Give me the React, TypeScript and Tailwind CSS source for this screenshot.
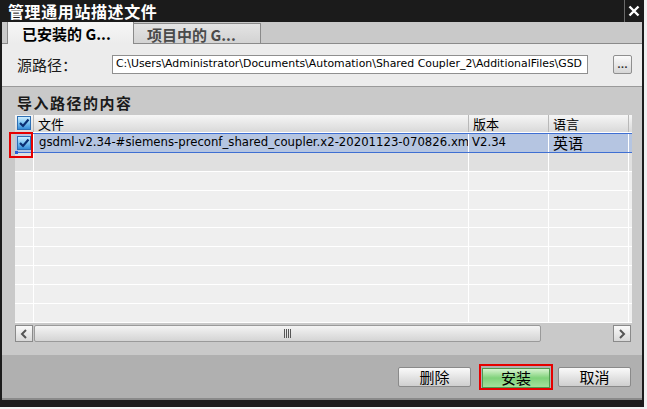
import React from "react";

const cjk = { fontFamily: '"Noto Sans CJK SC", "Noto Sans", sans-serif' };
const latin = { fontFamily: '"DejaVu Sans", "Noto Sans CJK SC", sans-serif' };

const CheckBox = () => (
  <svg width="14" height="14" viewBox="0 0 14 14">
    <defs>
      <linearGradient id="cb" x1="0" y1="0" x2="0" y2="1">
        <stop offset="0" stopColor="#d4f0ff" />
        <stop offset="0.5" stopColor="#7cc4f2" />
        <stop offset="1" stopColor="#2f86d6" />
      </linearGradient>
    </defs>
    <rect x="0.5" y="0.5" width="13" height="13" fill="url(#cb)" stroke="#2d6fb4" />
    <path d="M3 7 L6 10 L11.5 3.5" fill="none" stroke="#0b2f74" strokeWidth="2.2" />
  </svg>
);

const columns = [
  { name: "文件", w: "w-[435px]" },
  { name: "版本", w: "w-[80px]" },
  { name: "语言", w: "w-[80px]" },
];

const Button = ({ label }: { label: string }) => (
  <div
    className="w-[73px] h-[20px] flex items-center justify-center border border-[#8a8a8a] rounded-[2px] bg-gradient-to-b from-[#fafafa] to-[#cfcfcf] text-[15px] text-black"
    style={cjk}
  >
    {label}
  </div>
);

const EmptyRow = ({ dark }: { dark: boolean }) => (
  <div className={`flex h-[19px] border-b border-white ${dark ? "bg-[#e0e0e0]" : "bg-[#efefef]"}`}>
    <div className="w-[19px] border-r border-white" />
    <div className="w-[435px] border-r border-white" />
    <div className="w-[80px] border-r border-white" />
    <div className="w-[80px] border-r border-white" />
    <div className="flex-1" />
  </div>
);

export default function App() {
  return (
    <div className="w-[647px] h-[409px] bg-[#f0f0f0] overflow-hidden">
      <div className="w-[644px] h-[407px] bg-[#1b1b1b] flex flex-col px-[2px] pb-[7px]">
        {/* title bar */}
        <div className="h-[22px] flex items-center justify-between shrink-0">
          <span className="pl-[6px] text-white font-bold text-[16px] tracking-[0.6px] leading-none" style={cjk}>
            管理通用站描述文件
          </span>
          <div className="h-[22px] w-[18px] border-l border-[#6a6a6a] flex items-center justify-center">
            <svg width="12" height="12" viewBox="0 0 12 12">
              <path d="M1.5 1.5 L10.5 10.5 M10.5 1.5 L1.5 10.5" stroke="#fff" strokeWidth="2.4" />
            </svg>
          </div>
        </div>

        {/* tabs */}
        <div className="h-[22px] bg-[#c9c9c9] flex items-end shrink-0 relative">
          <div className="absolute left-0 right-0 bottom-0 h-px bg-[#8a8a8a]" />
          <div className="ml-[5px] w-[127px] h-[22px] relative z-10 bg-gradient-to-b from-[#f6f6f6] to-[#ececec] border-l border-r border-[#8a8a8a] flex items-center pl-[14px]">
            <span className="text-[15px] font-bold text-black leading-none" style={cjk}>
              已安装的 G...
            </span>
          </div>
          <div className="w-[127px] h-[21px] bg-gradient-to-b from-[#e4e4e4] to-[#d2d2d2] border-t border-r border-[#8a8a8a] flex items-center pl-[13px]">
            <span className="text-[15px] font-semibold text-[#4a4a4a] leading-none" style={cjk}>
              项目中的 G...
            </span>
          </div>
        </div>

        {/* source path */}
        <div className="h-[42px] bg-[#ececec] flex items-center shrink-0 pb-[2px]">
          <span className="ml-[15px] w-[95px] text-[15px] text-[#1a1a1a] leading-none" style={cjk}>
            源路径：
          </span>
          <div className="w-[476px] h-[19px] bg-white border border-[#8f8f8f] flex items-center pl-[3px] overflow-hidden whitespace-nowrap">
            <span className="text-[10.9px] text-black" style={latin}>
              C:\Users\Administrator\Documents\Automation\Shared Coupler_2\AdditionalFiles\GSD
            </span>
          </div>
          <div className="ml-[25px] w-[19px] h-[19px] border border-[#8f8f8f] rounded-[2px] bg-gradient-to-b from-[#fbfbfb] to-[#d6d6d6] flex items-end justify-center pb-[3px]">
            <span className="text-[9px] leading-none font-bold text-[#333]" style={latin}>...</span>
          </div>
        </div>
        <div className="h-px bg-[#9a9a9a] shrink-0" />

        {/* import content section */}
        <div className="h-[268px] bg-[#c9c9c9] shrink-0 flex flex-col pl-[13px] pr-[10px] relative">
          <div className="h-[28px] flex items-center pl-[2px] pt-[2px]">
            <span className="text-[15px] font-bold tracking-[1.5px] text-[#1a1a1a] leading-none" style={cjk}>
              导入路径的内容
            </span>
          </div>

          <div className="h-[208px] bg-[#efefef] flex flex-col overflow-hidden">
            {/* header */}
            <div className="flex h-[18px] bg-gradient-to-b from-[#f6f6f6] to-[#d9d9d9] border-b border-white">
              <div className="w-[19px] border-r border-[#b8b8b8] flex items-center justify-center">
                <CheckBox />
              </div>
              {columns.map((c) => (
                <div key={c.name} className={`${c.w} border-r border-[#b8b8b8] flex items-center pl-[4px]`}>
                  <span className="text-[13px] text-black leading-none" style={cjk}>{c.name}</span>
                </div>
              ))}
              <div className="flex-1" />
            </div>

            {/* selected row */}
            <div className="flex h-[20px] bg-[#b5c5e1] border-t border-b border-[#3f6fd2]">
              <div className="w-[19px] border-r border-white flex items-center justify-center">
                <CheckBox />
              </div>
              <div className="w-[435px] border-r border-white flex items-center pl-[5px] overflow-hidden whitespace-nowrap">
                <span className="text-[11.7px] text-black leading-none" style={latin}>
                  gsdml-v2.34-#siemens-preconf_shared_coupler.x2-20201123-070826.xm
                </span>
              </div>
              <div className="w-[80px] border-r border-white flex items-center pl-[3px]">
                <span className="text-[11.7px] text-black leading-none" style={latin}>V2.34</span>
              </div>
              <div className="w-[80px] border-r border-white flex items-center pl-[4px]">
                <span className="text-[15px] text-black leading-none" style={cjk}>英语</span>
              </div>
              <div className="flex-1" />
            </div>

            {Array.from({ length: 9 }).map((_, i) => (
              <EmptyRow key={i} dark={i === 0} />
            ))}
          </div>

          {/* horizontal scrollbar */}
          <div className="mt-[2px] h-[17px] flex">
            <div className="w-[18px] h-[17px] border border-[#8a8a8a] bg-gradient-to-b from-[#fafafa] to-[#d8d8d8] flex items-center justify-center">
              <svg width="8" height="10" viewBox="0 0 8 10">
                <path d="M6 1 L2 5 L6 9" fill="none" stroke="#555" strokeWidth="2" />
              </svg>
            </div>
            <div className="ml-px w-[507px] h-[17px] border border-[#9a9a9a] rounded-[2px] bg-gradient-to-b from-[#f4f4f4] to-[#d4d4d4] flex items-center justify-center">
              <svg width="8" height="9" viewBox="0 0 8 9">
                <path d="M0.5 0 V9 M2.5 0 V9 M4.5 0 V9 M6.5 0 V9" stroke="#555" strokeWidth="1" />
              </svg>
            </div>
            <div className="flex-1" />
            <div className="w-[18px] h-[17px] border border-[#8a8a8a] bg-gradient-to-b from-[#fafafa] to-[#d8d8d8] flex items-center justify-center">
              <svg width="8" height="10" viewBox="0 0 8 10">
                <path d="M2 1 L6 5 L2 9" fill="none" stroke="#555" strokeWidth="2" />
              </svg>
            </div>
            <div className="w-px" />
          </div>

          {/* red highlight on first row checkbox */}
          <div className="absolute left-[7px] top-[45px] w-[24px] h-[26px] border-2 border-[#e60000]" />
          <div className="absolute left-[13px] top-[64px] w-[3px] h-[3px] bg-[#2a5fd8]" />
        </div>

        {/* footer */}
        <div className="h-[43px] bg-[#b0b0b0] shrink-0 flex items-center justify-end pr-[11px] pt-[1px]">
          <Button label="删除" />
          <div className="ml-[8px] border-2 border-[#e60000] pt-[2px] px-px">
            <div
              className="w-[68px] h-[20px] flex items-center justify-center border border-[#4f9a4f] bg-gradient-to-b from-[#d6f3cf] via-[#7fd27a] to-[#a4e09c] text-[15px] text-black"
              style={cjk}
            >
              安装
            </div>
          </div>
          <div className="ml-[5px]">
            <Button label="取消" />
          </div>
        </div>
        <div className="h-[2px] bg-[#8a8a8a] shrink-0" />
      </div>
    </div>
  );
}
